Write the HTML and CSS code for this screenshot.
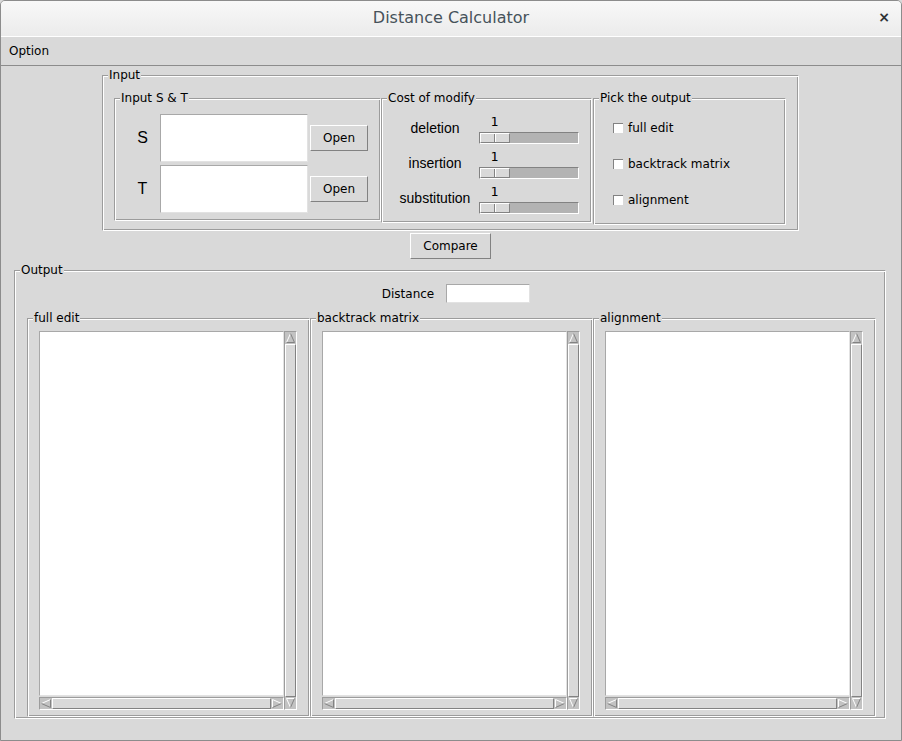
FILE: index.html
```html
<!DOCTYPE html>
<html>
<head>
<meta charset="utf-8">
<title>Distance Calculator</title>
<link rel="stylesheet" href="styles.css">
</head>
<body>
<div class="window">
  <div class="titlebar">
    <span></span>
    <span class="title">Distance Calculator</span>
    <span class="close">×</span>
  </div>
  <div class="menubar"><span class="menu-item">Option</span></div>
  <div class="content">
    <div class="group input-group">
      <span class="legend">Input</span>
      <div class="group st-group">
        <span class="legend">Input S &amp; T</span>
        <div class="st-grid">
          <span class="big-label">S</span>
          <div class="entry st-entry"></div>
          <button class="btn open-btn">Open</button>
          <span class="big-label">T</span>
          <div class="entry st-entry"></div>
          <button class="btn open-btn">Open</button>
        </div>
      </div>
      <div class="group cost-group">
        <span class="legend">Cost of modify</span>
        <span class="cost-label">deletion</span>
        <div class="scale"><div class="scale-value">1</div><div class="trough"><div class="handle"><span class="half"></span><span class="half"></span></div></div></div>
        <span class="cost-label">insertion</span>
        <div class="scale"><div class="scale-value">1</div><div class="trough"><div class="handle"><span class="half"></span><span class="half"></span></div></div></div>
        <span class="cost-label">substitution</span>
        <div class="scale"><div class="scale-value">1</div><div class="trough"><div class="handle"><span class="half"></span><span class="half"></span></div></div></div>
      </div>
      <div class="group pick-group">
        <span class="legend">Pick the output</span>
        <div class="check-row"><span class="checkbox"></span><span>full edit</span></div>
        <div class="check-row"><span class="checkbox"></span><span>backtrack matrix</span></div>
        <div class="check-row"><span class="checkbox"></span><span>alignment</span></div>
      </div>
    </div>
    <button class="btn compare-btn">Compare</button>
    <div class="group output-group">
      <span class="legend">Output</span>
      <div class="distance-row">
        <span>Distance</span>
        <div class="entry distance-entry"></div>
      </div>
      <div class="frames">
        <div class="group text-frame">
          <span class="legend">full edit</span>
          <div class="entry textarea"></div>
          <div class="vscroll">
            <div class="arrow"><svg width="11" height="12" viewBox="0 0 11 12"><path d="M1.5 10.5 L5.5 1.5" stroke="#fff" fill="none"/><path d="M5.5 1.5 L9.5 10.5 L1.5 10.5" stroke="#828282" fill="none"/></svg></div>
            <div class="slider"></div>
            <div class="arrow"><svg width="11" height="12" viewBox="0 0 11 12"><path d="M1.5 1.5 L9.5 1.5 M1.5 1.5 L5.5 10.5" stroke="#fff" fill="none"/><path d="M5.5 10.5 L9.5 1.5" stroke="#828282" fill="none"/></svg></div>
          </div>
          <div class="hscroll">
            <div class="arrow"><svg width="12" height="11" viewBox="0 0 12 11"><path d="M10.5 1.5 L1.5 5.5" stroke="#fff" fill="none"/><path d="M1.5 5.5 L10.5 9.5 L10.5 1.5" stroke="#828282" fill="none"/></svg></div>
            <div class="slider"></div>
            <div class="arrow"><svg width="12" height="11" viewBox="0 0 12 11"><path d="M1.5 9.5 L1.5 1.5 L10.5 5.5" stroke="#fff" fill="none"/><path d="M10.5 5.5 L1.5 9.5" stroke="#828282" fill="none"/></svg></div>
          </div>
        </div>
        <div class="group text-frame">
          <span class="legend">backtrack matrix</span>
          <div class="entry textarea"></div>
          <div class="vscroll">
            <div class="arrow"><svg width="11" height="12" viewBox="0 0 11 12"><path d="M1.5 10.5 L5.5 1.5" stroke="#fff" fill="none"/><path d="M5.5 1.5 L9.5 10.5 L1.5 10.5" stroke="#828282" fill="none"/></svg></div>
            <div class="slider"></div>
            <div class="arrow"><svg width="11" height="12" viewBox="0 0 11 12"><path d="M1.5 1.5 L9.5 1.5 M1.5 1.5 L5.5 10.5" stroke="#fff" fill="none"/><path d="M5.5 10.5 L9.5 1.5" stroke="#828282" fill="none"/></svg></div>
          </div>
          <div class="hscroll">
            <div class="arrow"><svg width="12" height="11" viewBox="0 0 12 11"><path d="M10.5 1.5 L1.5 5.5" stroke="#fff" fill="none"/><path d="M1.5 5.5 L10.5 9.5 L10.5 1.5" stroke="#828282" fill="none"/></svg></div>
            <div class="slider"></div>
            <div class="arrow"><svg width="12" height="11" viewBox="0 0 12 11"><path d="M1.5 9.5 L1.5 1.5 L10.5 5.5" stroke="#fff" fill="none"/><path d="M10.5 5.5 L1.5 9.5" stroke="#828282" fill="none"/></svg></div>
          </div>
        </div>
        <div class="group text-frame">
          <span class="legend">alignment</span>
          <div class="entry textarea"></div>
          <div class="vscroll">
            <div class="arrow"><svg width="11" height="12" viewBox="0 0 11 12"><path d="M1.5 10.5 L5.5 1.5" stroke="#fff" fill="none"/><path d="M5.5 1.5 L9.5 10.5 L1.5 10.5" stroke="#828282" fill="none"/></svg></div>
            <div class="slider"></div>
            <div class="arrow"><svg width="11" height="12" viewBox="0 0 11 12"><path d="M1.5 1.5 L9.5 1.5 M1.5 1.5 L5.5 10.5" stroke="#fff" fill="none"/><path d="M5.5 10.5 L9.5 1.5" stroke="#828282" fill="none"/></svg></div>
          </div>
          <div class="hscroll">
            <div class="arrow"><svg width="12" height="11" viewBox="0 0 12 11"><path d="M10.5 1.5 L1.5 5.5" stroke="#fff" fill="none"/><path d="M1.5 5.5 L10.5 9.5 L10.5 1.5" stroke="#828282" fill="none"/></svg></div>
            <div class="slider"></div>
            <div class="arrow"><svg width="12" height="11" viewBox="0 0 12 11"><path d="M1.5 9.5 L1.5 1.5 L10.5 5.5" stroke="#fff" fill="none"/><path d="M10.5 5.5 L1.5 9.5" stroke="#828282" fill="none"/></svg></div>
          </div>
        </div>
      </div>
    </div>
  </div>
</div>
</body>
</html>
```

FILE: styles.css
```css
* { box-sizing: border-box; }
html, body { margin: 0; padding: 0; background: #d9d9d9; }
body {
  font-family: "DejaVu Sans", sans-serif;
  font-size: 12px;
  color: #000;
}

.window {
  width: 902px;
  height: 741px;
  border: 1px solid #8c8c8c;
  border-radius: 5px 5px 0 0;
  background: #d9d9d9;
  overflow: hidden;
  display: flex;
  flex-direction: column;
}

.titlebar {
  height: 35px;
  flex: none;
  background: linear-gradient(#f8f8f8, #ebebeb);
  display: grid;
  grid-template-columns: 1fr auto 1fr;
  align-items: center;
  padding-bottom: 3px;
}
.title {
  font-size: 16px;
  color: #46525a;
}
.close {
  justify-self: end;
  margin-right: 11px;
  font-size: 14px;
  font-weight: bold;
  color: #2e3436;
}

.menubar {
  height: 30px;
  flex: none;
  border-top: 1px solid #fff;
  border-bottom: 1px solid #8c8c8c;
  padding-left: 8px;
  line-height: 28px;
}

.content {
  flex: 1;
  display: flex;
  flex-direction: column;
  align-items: flex-start;
}

.group {
  position: relative;
  border: 1px solid;
  border-color: #9c9c9c #fff #fff #9c9c9c;
  box-shadow: inset 1px 1px #fff, inset -1px -1px #9c9c9c;
}
.legend {
  position: absolute;
  top: -8px;
  left: 5px;
  padding: 0 1px;
  background: #d9d9d9;
  line-height: 14px;
  white-space: nowrap;
}

.input-group {
  margin: 9px 0 0 101px;
  width: 697px;
  height: 156px;
  padding: 22px 0 0 11px;
  display: flex;
  align-items: flex-start;
}

.st-group {
  width: 267px;
  height: 123px;
  padding: 15px 0 0 1px;
}
.st-grid {
  display: grid;
  grid-template-columns: 42px 148px 58px;
  grid-template-rows: 48px 48px;
  column-gap: 2px;
  row-gap: 3px;
  align-items: center;
}
.big-label {
  font-family: "Liberation Sans", Arial, sans-serif;
  font-size: 16px;
  text-align: center;
  padding-left: 11px;
}
.entry {
  background: #fff;
  border: 1px solid;
  border-color: #a8a8a8 #e2e2e2 #e2e2e2 #a8a8a8;
}
.st-entry { height: 48px; }

.btn {
  font-family: "DejaVu Sans", sans-serif;
  font-size: 12px;
  color: #000;
  background: #d9d9d9;
  border: 1px solid;
  border-color: #fff #828282 #828282 #fff;
  padding: 0;
}
.open-btn { width: 58px; height: 26px; }

.cost-group {
  width: 211px;
  height: 125px;
  padding: 15px 0 0 9px;
  display: grid;
  grid-template-columns: 88px 100px;
  grid-auto-rows: 35px;
  align-content: start;
}
.cost-label {
  font-family: "Liberation Sans", Arial, sans-serif;
  font-size: 14px;
  line-height: 16px;
  padding-top: 6px;
  text-align: center;
}
.scale-value {
  font-family: "DejaVu Sans Mono", monospace;
  font-size: 13px;
  line-height: 14px;
  height: 14px;
  margin-top: 1px;
  width: 31px;
  text-align: center;
}
.trough {
  margin-top: 3px;
  width: 100px;
  height: 12px;
  background: #b3b3b3;
  border: 1px solid;
  border-color: #828282 #fff #fff #828282;
}
.handle {
  width: 30px;
  height: 10px;
  display: flex;
  background: #d9d9d9;
  border: 1px solid;
  border-color: #fff #828282 #828282 #fff;
}
.half { flex: 1; }
.half:first-child { border-right: 1px solid #828282; }
.half:last-child { border-left: 1px solid #fff; }

.pick-group {
  margin-left: 1px;
  width: 193px;
  height: 127px;
  padding: 20px 0 0 19px;
  display: flex;
  flex-direction: column;
  gap: 18px;
}
.check-row {
  height: 18px;
  display: flex;
  align-items: center;
  gap: 5px;
}
.checkbox {
  width: 10px;
  height: 10px;
  background: #fff;
  border-top: 1px solid #828282;
  border-left: 1px solid #828282;
}

.compare-btn {
  margin: 2px 0 0 409px;
  width: 81px;
  height: 26px;
}

.output-group {
  margin: 11px 0 0 13px;
  width: 872px;
  height: 449px;
  padding: 13px 0 0 12px;
}
.distance-row {
  display: flex;
  align-items: center;
  justify-content: center;
  gap: 12px;
  height: 19px;
}
.distance-entry { width: 84px; height: 19px; }

.frames {
  margin-top: 15px;
  display: flex;
}
.text-frame {
  width: 283px;
  height: 399px;
  padding: 12px 12px 0 11px;
  display: grid;
  grid-template-columns: 245px 13px;
  grid-template-rows: 366px 13px;
}
.textarea {
  grid-column: 1;
  grid-row: 1;
  margin-bottom: 1px;
}
.vscroll {
  grid-column: 2;
  grid-row: 1 / span 2;
  display: flex;
  flex-direction: column;
  border: 1px solid;
  border-color: #9c9c9c #fff #fff #9c9c9c;
}
.hscroll {
  grid-column: 1;
  grid-row: 2;
  display: flex;
  border: 1px solid;
  border-color: #9c9c9c #fff #fff #9c9c9c;
}
.arrow {
  flex: none;
  background: #c2c2c2;
  display: flex;
}
.vscroll .arrow { height: 12px; }
.hscroll .arrow { width: 12px; }
.slider {
  flex: 1;
  background: #d9d9d9;
  border: 1px solid;
  border-color: #fff #828282 #828282 #fff;
}
```
